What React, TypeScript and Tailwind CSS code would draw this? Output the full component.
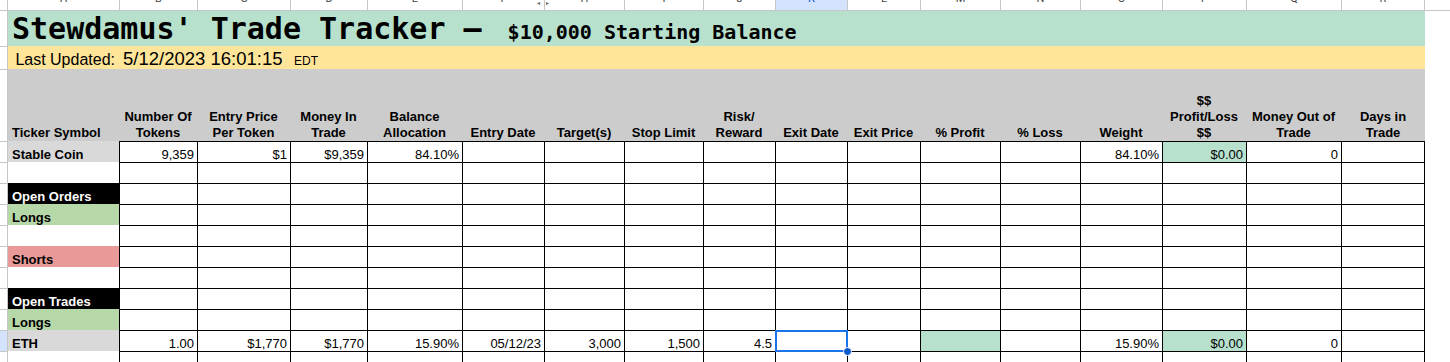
const grid =
  "grid grid-cols-[8px_111px_78px_93px_77px_95px_82px_80px_79px_72px_72px_73px_80px_80px_82px_84px_95px_84px_1fr]";

const letters = ["A", "B", "C", "D", "E", "F", "H", "I", "J", "K", "L", "M", "N", "O", "P", "Q", "R"];

const headers = [
  ["Ticker Symbol"],
  ["Number Of", "Tokens"],
  ["Entry Price", "Per Token"],
  ["Money In", "Trade"],
  ["Balance", "Allocation"],
  ["Entry Date"],
  ["Target(s)"],
  ["Stop Limit"],
  ["Risk/", "Reward"],
  ["Exit Date"],
  ["Exit Price"],
  ["% Profit"],
  ["% Loss"],
  ["Weight"],
  ["$$", "Profit/Loss", "$$"],
  ["Money Out of", "Trade"],
  ["Days in", "Trade"],
];

type Cell = { v?: string; bg?: string };
type Row = { label?: string; labelCls?: string; cells?: Record<number, Cell>; active?: boolean; sel?: number };

const rows: Row[] = [
  {
    label: "Stable Coin",
    labelCls: "bg-[#d9d9d9] text-black",
    cells: {
      1: { v: "9,359" },
      2: { v: "$1" },
      3: { v: "$9,359" },
      4: { v: "84.10%" },
      13: { v: "84.10%" },
      14: { v: "$0.00", bg: "bg-[#b7e1cd]" },
      15: { v: "0" },
    },
  },
  {},
  { label: "Open Orders", labelCls: "bg-black text-white" },
  { label: "Longs", labelCls: "bg-[#b6d7a8] text-black" },
  {},
  { label: "Shorts", labelCls: "bg-[#ea9999] text-black" },
  {},
  { label: "Open Trades", labelCls: "bg-black text-white" },
  { label: "Longs", labelCls: "bg-[#b6d7a8] text-black" },
  {
    label: "ETH",
    labelCls: "bg-[#d9d9d9] text-black",
    active: true,
    sel: 9,
    cells: {
      1: { v: "1.00" },
      2: { v: "$1,770" },
      3: { v: "$1,770" },
      4: { v: "15.90%" },
      5: { v: "05/12/23" },
      6: { v: "3,000" },
      7: { v: "1,500" },
      8: { v: "4.5" },
      11: { bg: "bg-[#b7e1cd]" },
      13: { v: "15.90%" },
      14: { v: "$0.00", bg: "bg-[#b7e1cd]" },
      15: { v: "0" },
    },
  },
  {},
];

function DataRow({ row }: { row: Row }) {
  return (
    <>
      <div className={`h-[21px] border-t border-r border-[#c4c7c5] ${row.active ? "bg-[#d3e3fd]" : "bg-white"}`} />
      <div
        className={`flex h-[21px] items-end pl-1 text-[13px] font-bold leading-[15px] ${row.labelCls ?? "bg-white"}`}
      >
        {row.label}
      </div>
      {letters.slice(1).map((_, j) => {
        const i = j + 1;
        const c = row.cells?.[i];
        const selected = row.sel === i;
        return (
          <div
            key={i}
            className={`relative flex h-[21px] items-end justify-end border-l border-t border-black pr-[3px] text-[13px] leading-[15px] text-black ${
              i === 16 ? "border-r" : ""
            } ${selected ? "z-10" : ""} ${c?.bg ?? "bg-white"}`}
          >
            {c?.v}
            {selected && (
              <div className="absolute -left-px -top-px h-[22px] w-[73px] border-2 border-[#1a73e8]">
                <div className="absolute -bottom-[6px] -right-[6px] h-[9px] w-[9px] rounded-full border border-white bg-[#0b57d0]" />
              </div>
            )}
          </div>
        );
      })}
      <div className="h-[21px] bg-white" />
    </>
  );
}

export default function App() {
  return (
    <div className="h-[362px] w-[1450px] overflow-hidden bg-white font-['Liberation_Sans',Arial,sans-serif] text-black">
      <div className={grid}>
        {/* column letters */}
        <div className="h-[11px] border-b border-r border-[#c4c7c5] bg-white" />
        {letters.map((l, i) => (
          <div
            key={l}
            className={`relative h-[11px] overflow-hidden border-b border-[#c4c7c5] ${i > 0 ? "border-l" : ""} ${
              i === 16 ? "border-r" : ""
            } ${l === "K" ? "bg-[#d3e3fd] text-[#0b57d0]" : "bg-white text-[#444746]"}`}
          >
            <div className="-mt-[7px] text-center font-['Roboto',sans-serif] text-[11px] leading-[11px]">{l}</div>
            {l === "F" && <span className="absolute right-[4px] top-0 text-[6px] leading-[6px] text-[#5f6368]">◂</span>}
            {l === "H" && <span className="absolute left-[1px] top-0 text-[6px] leading-[6px] text-[#5f6368]">▸</span>}
          </div>
        ))}
        <div className="h-[11px] border-b border-[#c4c7c5] bg-white" />

        {/* title */}
        <div className="h-[35px] border-r border-[#c4c7c5] bg-white" />
        <div className="col-span-17 flex h-[35px] items-end bg-[#b7e1cd] pl-1 font-['DejaVu_Sans_Mono',monospace] font-bold">
          <div className="flex items-baseline">
            <span className="text-[30px] leading-[35px]">Stewdamus' Trade Tracker –</span>
            <span className="ml-[26px] text-[20px] leading-[24px]">$10,000 Starting Balance</span>
          </div>
        </div>
        <div className="h-[35px] bg-white" />

        {/* last updated */}
        <div className="h-[23px] border-r border-t border-[#c4c7c5] bg-white" />
        <div className="flex h-[23px] items-end justify-end bg-[#ffe599] pr-[4px] text-[16px] leading-[18px]">
          Last Updated:
        </div>
        <div className="col-span-2 flex h-[23px] items-end whitespace-nowrap bg-[#ffe599] pl-[4px] text-[18.5px] leading-[21px]">
          5/12/2023 16:01:15
        </div>
        <div className="col-span-14 flex h-[23px] items-end bg-[#ffe599] pb-[1px] pl-[4px] text-[12px] leading-[14px]">
          EDT
        </div>
        <div className="h-[23px] bg-white" />

        {/* headers */}
        <div className="h-[72px] border-r border-t border-[#c4c7c5] bg-white" />
        {headers.map((h, i) => (
          <div
            key={i}
            className={`flex h-[72px] flex-col justify-end whitespace-nowrap bg-[#cccccc] text-[13px] font-bold leading-4 ${
              i === 0 ? "items-start pl-1" : "items-center"
            }`}
          >
            {h.map((t) => (
              <span key={t}>{t}</span>
            ))}
          </div>
        ))}
        <div className="h-[72px] bg-white" />

        {rows.map((r, i) => (
          <DataRow key={i} row={r} />
        ))}
      </div>
    </div>
  );
}
